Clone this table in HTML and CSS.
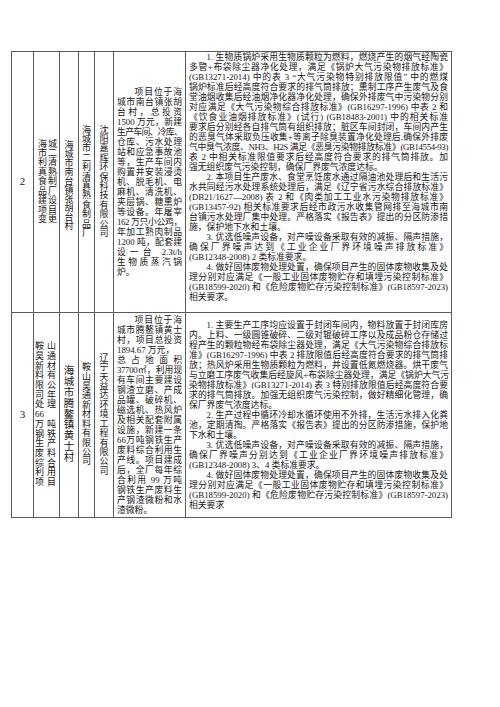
FILE: index.html
```html
<!DOCTYPE html>
<html lang="zh-CN">
<head>
<meta charset="utf-8">
<title>项目环保措施表</title>
<link rel="stylesheet" href="styles.css">
</head>
<body>
<div class="page">
<table class="grid">
<colgroup>
<col class="c-no"><col class="c-name"><col class="c-loc"><col class="c-unit"><col class="c-eia"><col class="c-info"><col class="c-req">
</colgroup>
<tbody>
<tr class="r2">
<td class="no">2</td>
<td class="pair p2"><span class="l">海城</span><span class="l">市二</span><span class="l">利清</span><span class="l">真熟</span><span class="l">食制</span><span class="l">品厂</span><span class="l">建设</span><span class="l">项目</span><span class="l">变更</span></td>
<td class="vt loc2">海<br>城<br>市<br>南<br>台<br>镇<br>张<br>胡<br>台<br>村</td>
<td class="vt">海<br>城<br>市<br>二<br>利<br>清<br>真<br>熟<br>食<br>制<br>品<br>厂</td>
<td class="vt">沈<br>阳<br>嘉<br>辉<br>环<br>保<br>科<br>技<br>有<br>限<br>公<br>司</td>
<td class="info">
<span class="l ind">项目位于海</span>
<span class="l">城市南台镇张胡</span>
<span class="l">台村，总投资</span>
<span class="l">1500 万元，新建</span>
<span class="l t2">生产车间、冷库、</span>
<span class="l">仓库、污水处理</span>
<span class="l">站和应急事故池</span>
<span class="l">等，生产车间内</span>
<span class="l">购置并安装浸烫</span>
<span class="l">机、脱毛机、电</span>
<span class="l">麻机、清洗机、</span>
<span class="l">夹层锅、糖熏炉</span>
<span class="l">等设备。年屠宰</span>
<span class="l t1">162 万只小公鸡，</span>
<span class="l">年加工熟肉制品</span>
<span class="l">1200 吨，配套建</span>
<span class="l">设一台 2.3t/h</span>
<span class="l">生物质蒸汽锅</span>
<span class="l end">炉。</span>
</td>
<td class="req top">
<span class="l ind">1. 生物质锅炉采用生物质颗粒为燃料，燃烧产生的烟气经陶瓷</span>
<span class="l">多管+布袋除尘器净化处理，满足《锅炉大气污染物排放标准》</span>
<span class="l">(GB13271-2014) 中的表 3 “大气污染物特别排放限值” 中的燃煤</span>
<span class="l">锅炉标准后经高度符合要求的排气筒排放；熏制工序产生废气及食</span>
<span class="l">堂油烟收集后经油烟净化器净化处理，确保外排废气中污染物分别</span>
<span class="l">对应满足《大气污染物综合排放标准》(GB16297-1996) 中表 2 和</span>
<span class="l">《饮食业油烟排放标准》(试行) (GB18483-2001) 中的相关标准</span>
<span class="l">要求后分别经各自排气筒有组织排放；脏区车间封闭，车间内产生</span>
<span class="l">的恶臭气体采取负压收集+等离子除臭装置净化处理后,确保外排废</span>
<span class="l t1">气中臭气浓度、NH3、H2S 满足《恶臭污染物排放标准》(GB14554-93)</span>
<span class="l">表 2 中相关标准限值要求后经高度符合要求的排气筒排放。加</span>
<span class="l end">强无组织废气污染控制，确保厂界废气浓度达标。</span>
<span class="l ind">2. 本项目生产废水、食堂烹饪废水通过隔油池处理后和生活污</span>
<span class="l">水共同经污水处理系统处理后，满足《辽宁省污水综合排放标准》</span>
<span class="l">(DB21/1627—2008) 表 2 和《肉类加工工业水污染物排放标准》</span>
<span class="l">(GB13457-92) 相关标准要求后经市政污水收集管网排至海城市南</span>
<span class="l">台镇污水处理厂集中处理。严格落实《报告表》提出的分区防渗措</span>
<span class="l end">施，保护地下水和土壤。</span>
<span class="l ind">3. 优选低噪声设备，对产噪设备采取有效的减振、隔声措施，</span>
<span class="l">确保厂界噪声达到《工业企业厂界环境噪声排放标准》</span>
<span class="l end">(GB12348-2008) 2 类标准要求。</span>
<span class="l ind">4. 做好固体废物处理处置，确保项目产生的固体废物收集及处</span>
<span class="l">理分别对应满足《一般工业固体废物贮存和填埋污染控制标准》</span>
<span class="l">(GB18599-2020) 和《危险废物贮存污染控制标准》(GB18597-2023)</span>
<span class="l end">相关要求。</span>
</td>
</tr>
<tr class="r3">
<td class="no">3</td>
<td class="pair p3"><span class="l">鞍山</span><span class="l">昊通</span><span class="l">新材</span><span class="l">料有</span><span class="l">限公</span><span class="l">司年</span><span class="l">处理</span><span class="l">66</span><span class="l">万吨</span><span class="l">钢铁</span><span class="l">生产</span><span class="l">废料</span><span class="l">综合</span><span class="l">利用</span><span class="l">项目</span></td>
<td class="vt big">海<br>城<br>市<br>腾<br>鳌<br>镇<br>黄<br>士<br>村</td>
<td class="vt">鞍<br>山<br>昊<br>通<br>新<br>材<br>料<br>有<br>限<br>公<br>司</td>
<td class="vt">辽<br>宁<br>天<br>益<br>达<br>环<br>境<br>工<br>程<br>有<br>限<br>公<br>司</td>
<td class="info">
<span class="l ind">项目位于海</span>
<span class="l">城市腾鳌镇黄士</span>
<span class="l">村，项目总投资</span>
<span class="l end">1894.67 万元，</span>
<span class="l">总占地面积</span>
<span class="l t1">37700㎡，利用现</span>
<span class="l">有车间主要建设</span>
<span class="l">钢渣立磨、产成</span>
<span class="l">品罐、破碎机、</span>
<span class="l">磁选机、热风炉</span>
<span class="l">及相关配套附属</span>
<span class="l">设施，新建一条</span>
<span class="l">66万吨钢铁生产</span>
<span class="l">废料综合利用生</span>
<span class="l">产线。项目建成</span>
<span class="l">后，全厂每年综</span>
<span class="l">合利用 99 万吨</span>
<span class="l">钢铁生产废料生</span>
<span class="l">产钢渣微粉和水</span>
<span class="l end">渣微粉。</span>
</td>
<td class="req">
<span class="l ind">1. 主要生产工序均应设置于封闭车间内，物料放置于封闭库房</span>
<span class="l">内。上料、一级圆锥破碎、二级对辊破碎工序以及成品粉仓存储过</span>
<span class="l">程产生的颗粒物经布袋除尘器处理，满足《大气污染物综合排放标</span>
<span class="l">准》(GB16297-1996) 中表 2 排放限值后经高度符合要求的排气筒排</span>
<span class="l">放；热风炉采用生物质颗粒为燃料，并设置低氮燃烧器。烘干废气</span>
<span class="l">与立磨工序废气收集后经旋风+布袋除尘器处理，满足《锅炉大气污</span>
<span class="l">染物排放标准》(GB13271-2014) 表 3 特别排放限值后经高度符合要</span>
<span class="l">求的排气筒排放。加强无组织废气污染控制，做好精细化管理，确</span>
<span class="l end">保厂界废气浓度达标。</span>
<span class="l ind">2. 生产过程中循环冷却水循环使用不外排，生活污水排入化粪</span>
<span class="l">池，定期清掏。严格落实《报告表》提出的分区防渗措施，保护地</span>
<span class="l end">下水和土壤。</span>
<span class="l ind">3. 优选低噪声设备，对产噪设备采取有效的减振、隔声措施，</span>
<span class="l">确保厂界噪声分别达到《工业企业厂界环境噪声排放标准》</span>
<span class="l end">(GB12348-2008) 3、4 类标准要求。</span>
<span class="l ind">4. 做好固体废物处理处置，确保项目产生的固体废物收集及处</span>
<span class="l">理分别对应满足《一般工业固体废物贮存和填埋污染控制标准》</span>
<span class="l">(GB18599-2020) 和《危险废物贮存污染控制标准》(GB18597-2023)</span>
<span class="l end">相关要求</span>
</td>
</tr>
</tbody>
</table>
</div>
</body>
</html>
```

FILE: styles.css
```css
html, body {
  margin: 0;
  padding: 0;
  background: #ffffff;
}

body {
  font-family: "Liberation Serif", "Noto Sans CJK SC", serif;
  color: #161616;
}

.page {
  padding: 51px 0 0 11px;
}

.grid {
  border-collapse: collapse;
  table-layout: fixed;
  width: 440px;
}

.c-no { width: 22px; }
.c-name { width: 26px; }
.c-loc { width: 19px; }
.c-unit { width: 16px; }
.c-eia { width: 19px; }
.c-info { width: 72px; }
.c-req { width: 266px; }

.r2 { height: 261px; }
.r3 { height: 205px; }

.grid td {
  border: 1px solid #5a5a5a;
  padding: 0;
  font-size: 8.8px;
  line-height: 9.6px;
  vertical-align: middle;
}

.grid td.no {
  text-align: center;
  font-size: 11px;
}

.grid td.vt {
  text-align: center;
  font-size: 9px;
  line-height: 9.4px;
}

.grid td.loc2 {
  line-height: 9px;
  padding-top: 8px;
}

.grid td.big {
  font-size: 10.5px;
  line-height: 10.8px;
}

.grid td.pair {
  font-size: 9px;
  line-height: 9.4px;
}

.grid td.p2 { padding: 0 2px 0 4px; }
.grid td.p3 { padding: 0 3px 0 1px; line-height: 9.7px; }

.grid td.info {
  padding: 0 3px;
  line-height: 10px;
}

.grid td.req {
  padding: 0 3px;
  line-height: 10px;
}

.grid td.top {
  vertical-align: top;
}

.l {
  display: block;
  white-space: nowrap;
  text-align: justify;
  text-align-last: justify;
}

.l.end {
  text-align: left;
  text-align-last: left;
}

.l.ind {
  text-indent: 2em;
}

.t1 { letter-spacing: -0.35px; }
.t2 { letter-spacing: -0.75px; }
```
